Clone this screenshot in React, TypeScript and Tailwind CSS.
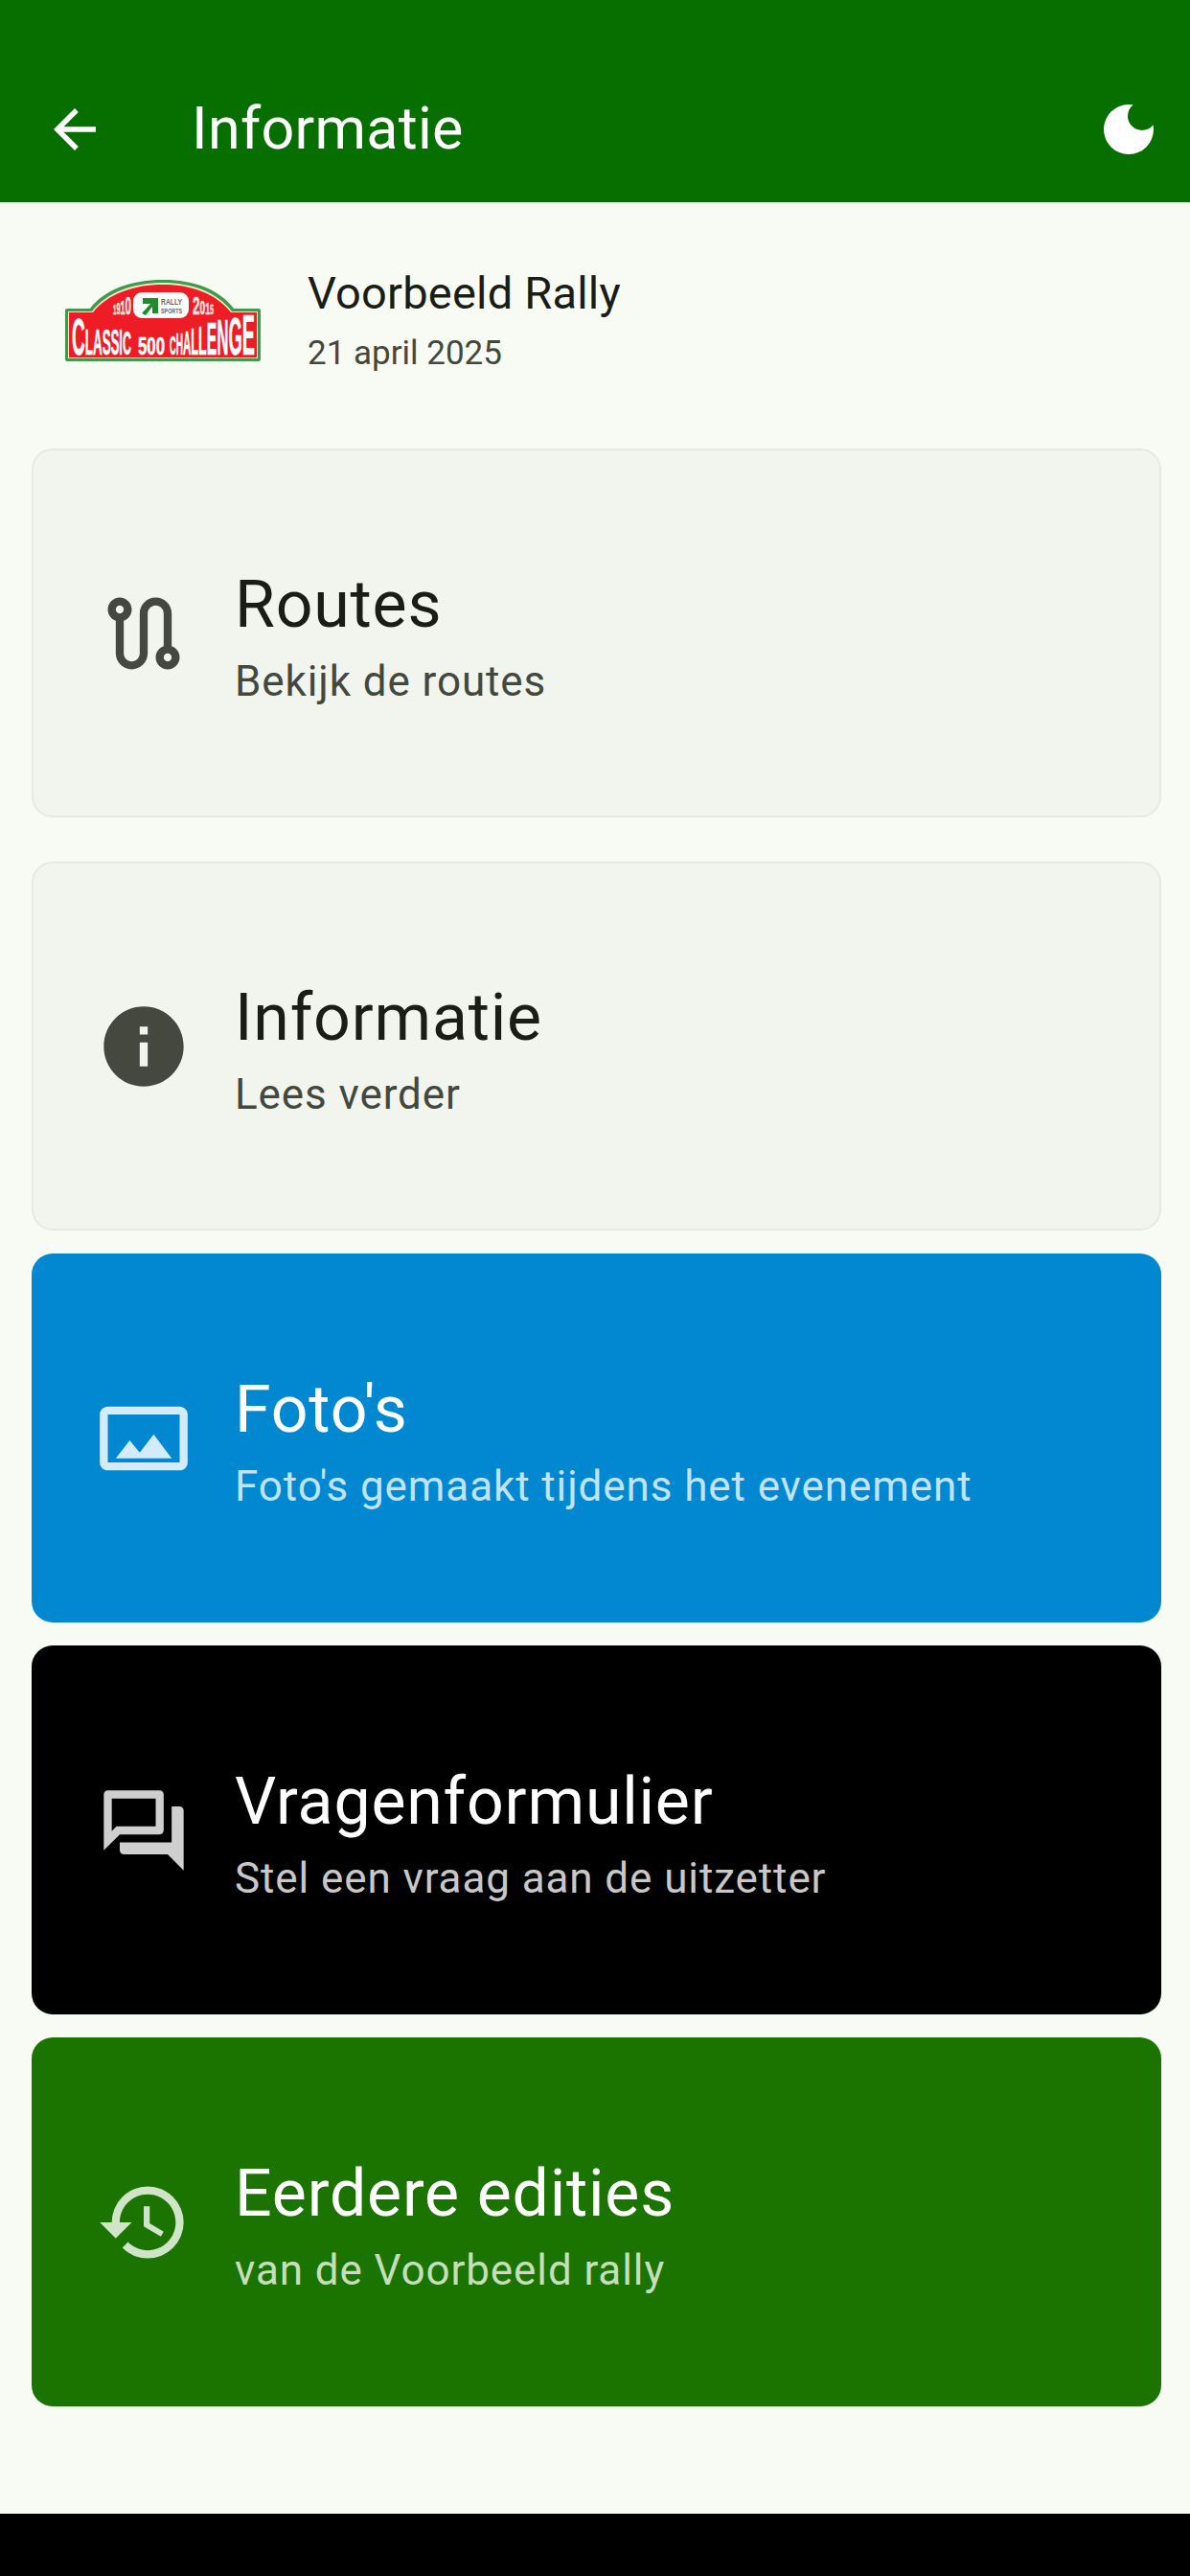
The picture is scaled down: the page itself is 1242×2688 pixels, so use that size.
import React from 'react';
import { MdArrowBack, MdHistory, MdInfo, MdOutlinePanorama, MdOutlineQuestionAnswer } from 'react-icons/md';

const font = { fontFamily: 'Roboto, sans-serif' };
const logoFont = '"Liberation Sans", sans-serif';

function RouteIcon({ className }: { className?: string }) {
  return (
    <svg viewBox="0 0 24 24" fill="currentColor" className={className}>
      <path d="M19,15.18V7c0-2.21-1.79-4-4-4s-4,1.79-4,4v10c0,1.1-0.9,2-2,2s-2-0.9-2-2V8.82C8.16,8.4,9,7.3,9,6c0-1.66-1.34-3-3-3S3,4.34,3,6c0,1.3,0.84,2.4,2,2.82V17c0,2.21,1.79,4,4,4s4-1.79,4-4V7c0-1.1,0.9-2,2-2s2,0.9,2,2v8.18c-1.16,0.41-2,1.51-2,2.82c0,1.66,1.34,3,3,3s3-1.34,3-3C21,16.7,20.16,15.6,19,15.18z M6,7C5.45,7,5,6.55,5,6s0.45-1,1-1s1,0.45,1,1S6.55,7,6,7z M18,19c-0.55,0-1-0.45-1-1s0.45-1,1-1s1,0.45,1,1S18.55,19,18,19z" />
    </svg>
  );
}

function MoonIcon() {
  return (
    <svg viewBox="0 0 52 52" className="w-[52px] h-[52px]">
      <circle cx="26" cy="26" r="26" fill="#ffffff" />
      <circle cx="40" cy="12" r="15" fill="#066f00" />
    </svg>
  );
}

// a word on the plate, every letter with its own height (logo units)
function PlateWord({ letters, x, y, w, fill = '#ffffff' }: { letters: [string, number][]; x: number; y: number; w: number; fill?: string }) {
  return (
    <text
      x={x}
      y={y}
      fontWeight={700}
      fill={fill}
      stroke={fill}
      strokeWidth={0.6}
      fontFamily={logoFont}
      textLength={w}
      lengthAdjust="spacingAndGlyphs"
    >
      {letters.map(([ch, h], i) => (
        <tspan key={i} fontSize={h / 0.72}>{ch}</tspan>
      ))}
    </text>
  );
}

const classic: [string, number][] = [['C', 38], ['L', 27], ['A', 27], ['S', 27], ['S', 26], ['I', 26], ['C', 25]];
const fiveHundred: [string, number][] = [['5', 18], ['0', 18], ['0', 18]];
const challenge: [string, number][] = [['C', 20], ['H', 22], ['A', 25], ['L', 28], ['L', 31], ['E', 34], ['N', 37], ['G', 40], ['E', 43]];
const yearLeft: [string, number][] = [['1', 10], ['9', 12], ['1', 15], ['0', 19]];
const yearRight: [string, number][] = [['2', 19], ['0', 14], ['1', 12], ['5', 10]];

function RallyLogo() {
  return (
    <svg viewBox="0 0 206 87" className="w-[206px] h-[87px] shrink-0">
      <path d="M3 86 Q1 86 1 84 V33 Q1 31 3 31 H27 C42 11 70 1 103 1 C136 1 162 11 177 31 H203 Q205 31 205 33 V84 Q205 86 203 86 Z" fill="#3f9a4e" />
      <path d="M4 83 V34 H29 C44 14 72 4 103 4 C134 4 160 14 175 34 H202 V83 Z" fill="#f3e6c4" />
      <path d="M5 82 V35 H30 C45 16 72 6 103 6 C134 6 159 16 174 35 H201 V82 Z" fill="#ee1c25" />
      <rect x="72" y="14" width="58" height="27" rx="9" fill="#ffffff" />
      <path d="M81 36 L90 26 H82 V20 H98 V36 H92 V29 L85 38 Z" fill="#1f8a2e" />
      <text x="101" y="27" fontSize="9" fontWeight="700" fill="#666666" fontFamily={logoFont} textLength="22" lengthAdjust="spacingAndGlyphs">RALLY</text>
      <text x="101" y="36" fontSize="8" fontWeight="700" fill="#666666" fontFamily={logoFont} textLength="22" lengthAdjust="spacingAndGlyphs">SPORTS</text>
      <PlateWord letters={yearLeft} x={51} y={37} w={19} fill="#fbe3e3" />
      <PlateWord letters={yearRight} x={134} y={37} w={22} fill="#fbe3e3" />
      <PlateWord letters={classic} x={8} y={79} w={62} />
      <PlateWord letters={fiveHundred} x={77} y={79} w={28} />
      <PlateWord letters={challenge} x={110} y={79} w={89} />
    </svg>
  );
}

function MenuCard({ icon, title, sub, boxClass, titleClass, subClass, iconClass }: {
  icon: React.ReactNode;
  title: string;
  sub: string;
  boxClass: string;
  titleClass: string;
  subClass: string;
  iconClass: string;
}) {
  return (
    <div className={`h-[385px] rounded-[22px] border-2 flex items-center pl-[65px] gap-[45px] ${boxClass}`}>
      <div className={`w-[100px] h-[100px] shrink-0 flex items-center justify-center ${iconClass}`}>{icon}</div>
      <div className="flex flex-col gap-2 pt-2">
        <div className={`text-[68px] leading-[84px] tracking-[0.8px] ${titleClass}`}>{title}</div>
        <div className={`text-[44px] leading-[60px] tracking-[0.9px] ${subClass}`}>{sub}</div>
      </div>
    </div>
  );
}

export default function App() {
  return (
    <div className="h-[2688px] flex flex-col bg-[#f8fbf3]" style={font}>
      <header className="h-[211px] bg-[#066f00] flex items-end justify-between pb-[43px] pl-[45px] pr-[38px] text-white">
        <div className="flex items-center gap-[89px] h-[66px]">
          <MdArrowBack size={66} />
          <span className="text-[61px] leading-[64px] tracking-[0.3px] pb-[2px]">Informatie</span>
        </div>
        <div className="h-[66px] flex items-center">
          <MoonIcon />
        </div>
      </header>

      <div className="h-[246px] flex items-center pl-[67px] gap-[48px]">
        <RallyLogo />
        <div className="flex flex-col gap-[6px]">
          <span className="text-[47px] leading-[64px] tracking-[0.2px] text-[#1a1c18]">Voorbeeld Rally</span>
          <span className="text-[35px] leading-[50px] text-[#43483f]">21 april 2025</span>
        </div>
      </div>

      <main className="mt-[11px] pl-[33px] pr-[30px] flex flex-col gap-6">
        <div className="mb-[22px]">
          <MenuCard
            icon={<RouteIcon className="w-[100px] h-[100px]" />}
            title="Routes"
            sub="Bekijk de routes"
            boxClass="bg-[#f2f5ed] border-[#e6e9e1]"
            titleClass="text-[#1a1c18]"
            subClass="text-[#43483f]"
            iconClass="text-[#44483f]"
          />
        </div>
        <MenuCard
          icon={<MdInfo size={100} />}
          title="Informatie"
          sub="Lees verder"
          boxClass="bg-[#f2f5ed] border-[#e6e9e1]"
          titleClass="text-[#1a1c18]"
          subClass="text-[#43483f]"
          iconClass="text-[#44483f]"
        />
        <MenuCard
          icon={<MdOutlinePanorama size={100} />}
          title="Foto's"
          sub="Foto's gemaakt tijdens het evenement"
          boxClass="bg-[#0288d1] border-transparent"
          titleClass="text-[#ffffff]"
          subClass="text-[#bfe3f7]"
          iconClass="text-[#d3ebfa]"
        />
        <MenuCard
          icon={<MdOutlineQuestionAnswer size={100} />}
          title="Vragenformulier"
          sub="Stel een vraag aan de uitzetter"
          boxClass="bg-black border-transparent"
          titleClass="text-[#ffffff]"
          subClass="text-[#c8c8c8]"
          iconClass="text-[#cfcfcf]"
        />
        <MenuCard
          icon={<MdHistory size={100} />}
          title="Eerdere edities"
          sub="van de Voorbeeld rally"
          boxClass="bg-[#1b7400] border-transparent"
          titleClass="text-[#ffffff]"
          subClass="text-[#c5dfbb]"
          iconClass="text-[#d0e5c8]"
        />
      </main>

      <div className="mt-auto h-[65px] bg-black" />
    </div>
  );
}
